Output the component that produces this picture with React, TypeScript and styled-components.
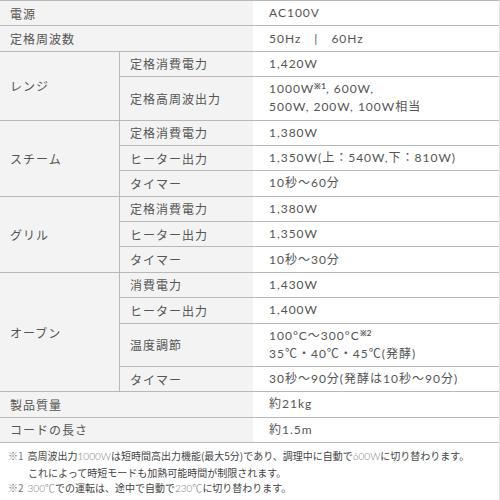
import styled, { createGlobalStyle } from 'styled-components';

const GlobalStyle = createGlobalStyle`
  html, body {
    margin: 0;
    padding: 0;
    background: #ffffff;
  }

  body {
    font-family: Lato, "Noto Sans CJK JP", sans-serif;
    color: #555555;
  }
`;

const LINE = '#b9b9b9';

const Table = styled.div`
  width: 500px;
  box-sizing: border-box;
  border-top: 1px solid ${LINE};
  border-right: 1px solid #e2e2e2;
`;

const Row = styled.div`
  display: flex;
  border-bottom: 1px solid ${LINE};
`;

const Label = styled.div<{ wide?: boolean }>`
  width: ${(props) => (props.wide ? '253px' : '120px')};
  flex-shrink: 0;
  box-sizing: border-box;
  padding-left: 10px;
  background: #f3f3f3;
  font-family: "Noto Sans CJK JP", sans-serif;
  font-size: 12px;
  letter-spacing: 1px;
  display: flex;
  align-items: center;
  color: #555555;
  border-right: ${(props) => (props.wide ? 'none' : `1px solid ${LINE}`)};
`;

const SubRows = styled.div`
  flex: 1;
  display: flex;
  flex-direction: column;

  > div:last-child {
    border-bottom: none;
  }
`;

const SubRow = styled.div`
  display: flex;
  border-bottom: 1px solid ${LINE};
`;

const SubLabel = styled.div`
  width: 133px;
  flex-shrink: 0;
  box-sizing: border-box;
  padding-left: 10px;
  background: #f3f3f3;
  font-family: "Noto Sans CJK JP", sans-serif;
  font-size: 12px;
  letter-spacing: 1px;
  color: #555555;
  display: flex;
  align-items: center;
`;

const Value = styled.div`
  flex: 1;
  padding: 3.2px 0 3.2px 16px;
  background: #ffffff;
  font-size: 12px;
  line-height: 18px;
  letter-spacing: 1px;
  color: #555555;
`;

const Mark = styled.sup`
  font-family: Lato, sans-serif;
  font-size: 8px;
  line-height: 0;
  letter-spacing: 0;
  vertical-align: 4px;
  font-weight: 700;
  color: #555555;
`;

const Notes = styled.div`
  padding: 5px 8px 10px;
  border-bottom: 1px solid #e2e2e2;
  font-family: "Noto Sans CJK JP", sans-serif;
  font-size: 10px;
  line-height: 15.5px;
  letter-spacing: 0;
  color: #444444;
`;

const NoteLine = styled.div<{ indent?: boolean }>`
  padding-left: ${(props) => (props.indent ? '20px' : '0')};
  white-space: nowrap;
`;

const NoteMark = styled.span`
  color: #777777;
  margin-right: 4px;
`;

const Light = styled.span`
  font-family: Lato, "Noto Sans CJK JP", sans-serif;
  font-weight: 300;
  color: #7a7a7a;
`;

type Sub = { label: string; value: React.ReactNode };

type Group = { label: string; rows: Sub[] };

const groups: Group[] = [
  {
    label: 'レンジ',
    rows: [
      { label: '定格消費電力', value: '1,420W' },
      {
        label: '定格高周波出力',
        value: (
          <>
            1000W
            <Mark>※1</Mark>
            , 600W,
            <br />
            500W, 200W, 100W相当
          </>
        ),
      },
    ],
  },
  {
    label: 'スチーム',
    rows: [
      { label: '定格消費電力', value: '1,380W' },
      { label: 'ヒーター出力', value: '1,350W(上：540W,下：810W)' },
      { label: 'タイマー', value: '10秒～60分' },
    ],
  },
  {
    label: 'グリル',
    rows: [
      { label: '定格消費電力', value: '1,380W' },
      { label: 'ヒーター出力', value: '1,350W' },
      { label: 'タイマー', value: '10秒～30分' },
    ],
  },
  {
    label: 'オーブン',
    rows: [
      { label: '消費電力', value: '1,430W' },
      { label: 'ヒーター出力', value: '1,400W' },
      {
        label: '温度調節',
        value: (
          <>
            100°C～300°C
            <Mark>※2</Mark>
            <br />
            35℃・40℃・45℃(発酵)
          </>
        ),
      },
      { label: 'タイマー', value: '30秒～90分(発酵は10秒～90分)' },
    ],
  },
];

export default function App() {
  return (
    <>
      <GlobalStyle />
      <Table>
        <Row>
          <Label wide>電源</Label>
          <Value>AC100V</Value>
        </Row>
        <Row>
          <Label wide>定格周波数</Label>
          <Value>50Hz　|　60Hz</Value>
        </Row>
        {groups.map((group) => (
          <Row key={group.label}>
            <Label>{group.label}</Label>
            <SubRows>
              {group.rows.map((sub) => (
                <SubRow key={sub.label}>
                  <SubLabel>{sub.label}</SubLabel>
                  <Value>{sub.value}</Value>
                </SubRow>
              ))}
            </SubRows>
          </Row>
        ))}
        <Row>
          <Label wide>製品質量</Label>
          <Value>約21kg</Value>
        </Row>
        <Row>
          <Label wide>コードの長さ</Label>
          <Value>約1.5m</Value>
        </Row>
        <Notes>
          <NoteLine>
            <NoteMark>※1</NoteMark>
            高周波出力
            <Light>1000W</Light>
            は短時間高出力機能(最大5分)であり、調理中に自動で
            <Light>600W</Light>
            に切り替わります。
          </NoteLine>
          <NoteLine indent>
            これによって時短モードも加熱可能時間が制限されます。
          </NoteLine>
          <NoteLine>
            <NoteMark>※2</NoteMark>
            <Light>300℃</Light>
            での運転は、途中で自動で
            <Light>230℃</Light>
            に切り替わります。
          </NoteLine>
        </Notes>
      </Table>
    </>
  );
}
